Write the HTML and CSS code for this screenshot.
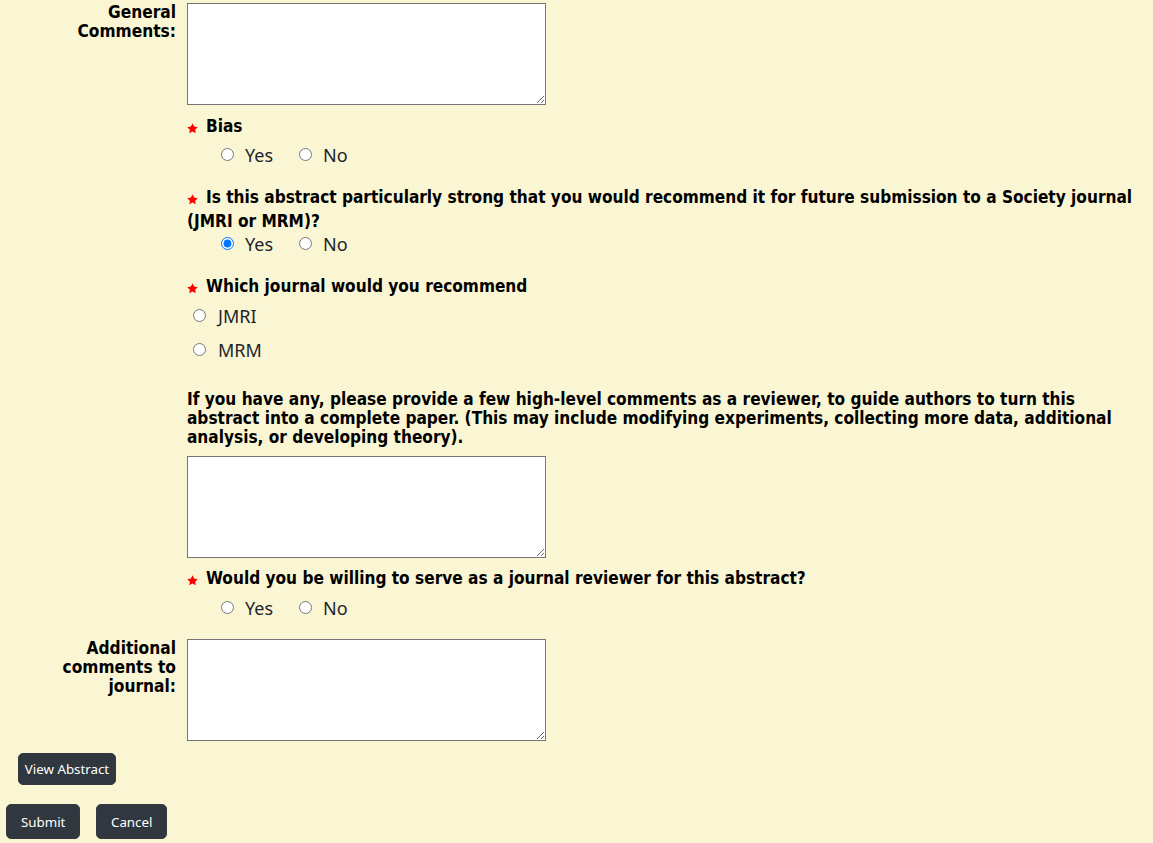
FILE: index.html
```html
<!DOCTYPE html>
<html>
<head>
<meta charset="utf-8">
<title>Review Form</title>
<link rel="stylesheet" href="styles.css">
</head>
<body>
<form class="form">
  <div class="row row-first">
    <label class="side-label">General<br>Comments:</label>
    <div class="side-field"><textarea class="ta"></textarea></div>
  </div>

  <div class="main">
    <div class="q-head q-bias"><svg class="star" viewBox="0 0 10 10"><path d="M5 0.3 L6.47 3.28 L9.76 3.76 L7.38 6.07 L7.94 9.35 L5 7.8 L2.06 9.35 L2.62 6.07 L0.24 3.76 L3.53 3.28 Z"/></svg>Bias</div>
    <div class="radios r-bias">
      <label class="opt"><input type="radio" name="bias"><span>Yes</span></label>
      <label class="opt"><input type="radio" name="bias"><span>No</span></label>
    </div>

    <div class="q-head q-strong"><svg class="star" viewBox="0 0 10 10"><path d="M5 0.3 L6.47 3.28 L9.76 3.76 L7.38 6.07 L7.94 9.35 L5 7.8 L2.06 9.35 L2.62 6.07 L0.24 3.76 L3.53 3.28 Z"/></svg>Is this abstract particularly strong that you would recommend it for future submission to a Society journal (JMRI or MRM)?</div>
    <div class="radios r-strong">
      <label class="opt"><input type="radio" name="strong" checked><span>Yes</span></label>
      <label class="opt"><input type="radio" name="strong"><span>No</span></label>
    </div>

    <div class="q-head q-journal"><svg class="star" viewBox="0 0 10 10"><path d="M5 0.3 L6.47 3.28 L9.76 3.76 L7.38 6.07 L7.94 9.35 L5 7.8 L2.06 9.35 L2.62 6.07 L0.24 3.76 L3.53 3.28 Z"/></svg>Which journal would you recommend</div>
    <label class="opt opt-stack opt-jmri"><input type="radio" name="journal"><span>JMRI</span></label>
    <label class="opt opt-stack opt-mrm"><input type="radio" name="journal"><span>MRM</span></label>

    <p class="para">If you have any, please provide a few high-level comments as a reviewer, to guide authors to turn this abstract into a complete paper. (This may include modifying experiments, collecting more data, additional analysis, or developing theory).</p>
    <textarea class="ta ta-mid"></textarea>

    <div class="q-head q-willing"><svg class="star" viewBox="0 0 10 10"><path d="M5 0.3 L6.47 3.28 L9.76 3.76 L7.38 6.07 L7.94 9.35 L5 7.8 L2.06 9.35 L2.62 6.07 L0.24 3.76 L3.53 3.28 Z"/></svg>Would you be willing to serve as a journal reviewer for this abstract?</div>
    <div class="radios r-willing">
      <label class="opt"><input type="radio" name="willing"><span>Yes</span></label>
      <label class="opt"><input type="radio" name="willing"><span>No</span></label>
    </div>
  </div>

  <div class="row row-last">
    <label class="side-label">Additional<br>comments to<br>journal:</label>
    <div class="side-field"><textarea class="ta"></textarea></div>
  </div>

  <div class="view-row"><button type="button" class="btn btn-view">View Abstract</button></div>
  <div class="actions">
    <button type="button" class="btn btn-act">Submit</button>
    <button type="button" class="btn btn-act">Cancel</button>
  </div>
</form>
</body>
</html>
```
FILE: styles.css
```css
html, body {
  margin: 0;
  padding: 0;
  background: #faf6d4;
}
body {
  font-family: "Noto Sans", "Open Sans", sans-serif;
  color: #212529;
}
.form {
  margin: 0;
  padding: 0 0 4px 0;
}
.row {
  display: flex;
  align-items: flex-start;
}
.row-first {
  padding-top: 3px;
}
.row-last {
  margin-top: 22px;
}
.side-label {
  width: 176px;
  text-align: right;
  font-family: "DejaVu Sans Condensed", "DejaVu Sans", sans-serif;
  font-weight: bold;
  font-size: 17.2px;
  line-height: 19px;
  color: #000;
}
.side-field {
  margin-left: 11px;
}
.ta {
  display: block;
  box-sizing: border-box;
  width: 359px;
  height: 102px;
  margin: 0;
  padding: 2px;
  border: 1px solid #767676;
  border-radius: 0;
  background: #fff;
  font-family: "Noto Sans", sans-serif;
  font-size: 13px;
}
.main {
  margin-left: 187px;
  width: 956px;
}
.q-head {
  font-family: "DejaVu Sans Condensed", "DejaVu Sans", sans-serif;
  font-weight: bold;
  font-size: 17.1px;
  line-height: 24px;
  color: #000;
}
.star {
  display: inline-block;
  width: 11px;
  height: 11px;
  margin-left: 0;
  margin-right: 8px;
  vertical-align: -2px;
  fill: #f00;
}
.q-bias { margin-top: 9px; }
.q-strong { margin-top: 21px; }
.q-journal { margin-top: 21px; }
.q-willing { margin-top: 8px; }

.radios {
  display: flex;
  align-items: center;
  height: 20px;
  padding-left: 34px;
  gap: 26px;
}
.r-bias { margin-top: 6px; }
.r-strong { margin-top: 0; }
.r-willing { margin-top: 7px; }

.opt {
  display: flex;
  align-items: center;
  height: 20px;
  font-size: 18px;
  line-height: 20px;
  color: #212529;
}
.opt input {
  width: 13px;
  height: 13px;
  margin: 0 11px 0 0;
  flex: none;
}
.opt span {
  position: relative;
  top: 1px;
}
.opt-stack {
  padding-left: 6px;
}
.opt-stack input {
  margin-right: 12px;
}
.opt-jmri { margin-top: 7px; }
.opt-mrm { margin-top: 14px; }

.para {
  margin: 31px 0 0 0;
  font-family: "DejaVu Sans Condensed", "DejaVu Sans", sans-serif;
  font-weight: bold;
  font-size: 17.1px;
  line-height: 19px;
  color: #000;
}
.ta-mid {
  margin-top: 9px;
}

.view-row {
  margin-top: 12px;
  padding-left: 18px;
}
.actions {
  display: flex;
  gap: 16px;
  margin-top: 19px;
  padding-left: 6px;
}
.btn {
  box-sizing: border-box;
  margin: 0;
  border: 1px solid #343a40;
  border-radius: 5px;
  background: #30373e;
  color: #fff;
  font-family: "Noto Sans", sans-serif;
  font-size: 13.3px;
  line-height: 18px;
  cursor: pointer;
}
.btn-view {
  height: 32px;
  width: 98px;
  padding: 0;
}
.btn-act {
  height: 35px;
  padding: 0 14px;
}
.btn-act:first-child { width: 74px; }
.btn-act:last-child { width: 71px; }
```
